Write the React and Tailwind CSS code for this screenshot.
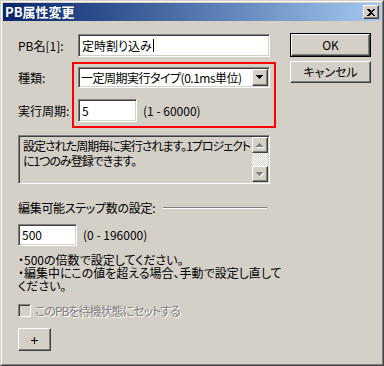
import React from 'react';

const sunken =
    'border border-t-[#808080] border-l-[#808080] border-r-white border-b-white shadow-[inset_1px_1px_0_#404040,inset_-1px_-1px_0_#d4d0c8]';
const raised =
    'border border-t-white border-l-white border-r-[#404040] border-b-[#404040] shadow-[inset_-1px_-1px_0_#808080,inset_1px_1px_0_#d4d0c8]';

const ArrowUp = () => (
    <svg width="8" height="5" viewBox="0 0 8 5" shapeRendering="crispEdges">
        <polygon points="1,5 8,5 4.5,1" fill="#fff" />
        <polygon points="0,4 7,4 3.5,0" fill="#808080" />
    </svg>
);

const ArrowDown = ({ color = '#808080', shadow = true }) => (
    <svg width="8" height="5" viewBox="0 0 8 5" shapeRendering="crispEdges">
        {shadow && <polygon points="1,1 8,1 4.5,5" fill="#fff" />}
        <polygon points="0,0 7,0 3.5,4" fill={color} />
    </svg>
);

const App = () => {
    return (
        <div className="w-[384px] h-[366px] bg-[#d4d0c8] text-[12px] leading-[14px] text-black font-['Noto_Sans_CJK_JP',sans-serif] [font-feature-settings:'palt']">
            <div className="w-full h-full border border-t-[#d4d0c8] border-l-[#d4d0c8] border-r-[#404040] border-b-[#404040]">
                <div className="w-full h-full border border-t-white border-l-white border-r-[#808080] border-b-[#808080] p-px">
                    {/* Title bar */}
                    <div className="h-[18px] flex items-center justify-between pl-[2px] pr-[2px] bg-linear-to-r from-[#0a246a] to-[#a6caf0]">
                        <span className="text-white font-bold text-[13px] leading-[16px]">PB属性変更</span>
                        <button className={`w-[16px] h-[14px] flex items-center justify-center bg-[#d4d0c8] ${raised}`}>
                            <svg width="8" height="7" viewBox="0 0 8 7" shapeRendering="crispEdges">
                                <path d="M0 0h2l2 2 2-2h2L5 3.5 8 7H6L4 5 2 7H0l3-3.5z" fill="#000" />
                            </svg>
                        </button>
                    </div>

                    {/* Body */}
                    <div className="flex pl-[15px] pt-[12px]">
                        <div className="relative w-[252px] shrink-0 pt-px">
                            <div className="flex items-center h-[23px]">
                                <span className="w-[60px]">PB名[1]:</span>
                                <div className={`flex-1 h-full bg-white flex items-center pl-[3px] ${sunken}`}>
                                    定時割り込み
                                    <span className="w-px h-[13px] bg-black ml-px" />
                                </div>
                            </div>

                            <div className="flex items-center h-[21px] mt-[10px]">
                                <span className="w-[60px]">種類:</span>
                                <div className={`flex-1 h-full bg-white flex items-center pl-[2px] pr-[1px] ${sunken}`}>
                                    <span className="flex-1 tracking-[-0.5px] whitespace-nowrap">一定周期実行タイプ(0.1ms単位)</span>
                                    <div className={`w-[16px] h-[17px] shrink-0 bg-[#d4d0c8] flex items-center justify-center ${raised}`}>
                                        <ArrowDown color="#000" shadow={false} />
                                    </div>
                                </div>
                            </div>

                            <div className="flex items-center h-[23px] mt-[11px]">
                                <span className="w-[60px]">実行周期:</span>
                                <div className={`w-[59px] h-full bg-white flex items-center pl-[3px] ${sunken}`}>5</div>
                                <span className="ml-[6px]">(1 - 60000)</span>
                            </div>

                            <div className={`flex h-[49px] mt-[13px] p-px ${sunken}`}>
                                <div className="flex-1 min-w-0 overflow-hidden pl-[3px] pt-[1px] leading-[15px] whitespace-nowrap tracking-[-1px]">
                                    設定された周期毎に実行されます。1プロジェクト
                                    <br />
                                    に1つのみ登録できます。
                                </div>
                                <div className="w-[16px] shrink-0 flex flex-col">
                                    <div className={`h-[16px] bg-[#d4d0c8] flex items-center justify-center ${raised}`}>
                                        <ArrowUp />
                                    </div>
                                    <div className="flex-1 bg-[repeating-conic-gradient(#fff_0_25%,#d4d0c8_0_50%)] bg-[length:2px_2px]" />
                                    <div className={`h-[16px] bg-[#d4d0c8] flex items-center justify-center ${raised}`}>
                                        <ArrowDown />
                                    </div>
                                </div>
                            </div>

                            <div className="flex items-center h-[14px] mt-[17px]">
                                <span className="tracking-[-0.3px]">編集可能ステップ数の設定:</span>
                                <div className="flex-1 ml-[8px] mr-[3px] h-[2px] border-t border-t-[#808080] border-b border-b-white" />
                            </div>

                            <div className="flex items-center h-[22px] mt-[9px]">
                                <div className={`w-[59px] h-full bg-white flex items-center pl-[3px] ${sunken}`}>500</div>
                                <span className="ml-[6px]">(0 - 196000)</span>
                            </div>

                            <div className="mt-[7px] leading-[13px] whitespace-nowrap">
                                <div>・500の倍数で設定してください。</div>
                                <div>・編集中にこの値を超える場合、手動で設定し直して</div>
                                <div>ください。</div>
                            </div>

                            <div className="flex items-center h-[13px] mt-[12px]">
                                <div className={`w-[13px] h-[13px] bg-[#d4d0c8] ${sunken}`} />
                                <span className="ml-[4px] tracking-[-1px] text-[#808080] [text-shadow:1px_1px_0_#fff]">
                                    このPBを待機状態にセットする
                                </span>
                            </div>

                            <button className={`mt-[11px] w-[33px] h-[23px] bg-[#d4d0c8] flex items-center justify-center text-[14px] ${raised}`}>
                                +
                            </button>

                            {/* annotation frame */}
                            <div className="absolute top-[29px] left-[54px] w-[204px] h-[66px] border-2 border-[#ff0000] pointer-events-none" />
                        </div>

                        <div className="ml-[20px] w-[81px] flex flex-col gap-[4px]">
                            <div className="h-[24px] border border-black">
                                <button className={`w-full h-full bg-[#d4d0c8] flex items-center justify-center ${raised}`}>
                                    OK
                                </button>
                            </div>
                            <button className={`h-[22px] bg-[#d4d0c8] flex items-center justify-center ${raised}`}>
                                キャンセル
                            </button>
                        </div>
                    </div>
                </div>
            </div>
        </div>
    );
};

export default App;
